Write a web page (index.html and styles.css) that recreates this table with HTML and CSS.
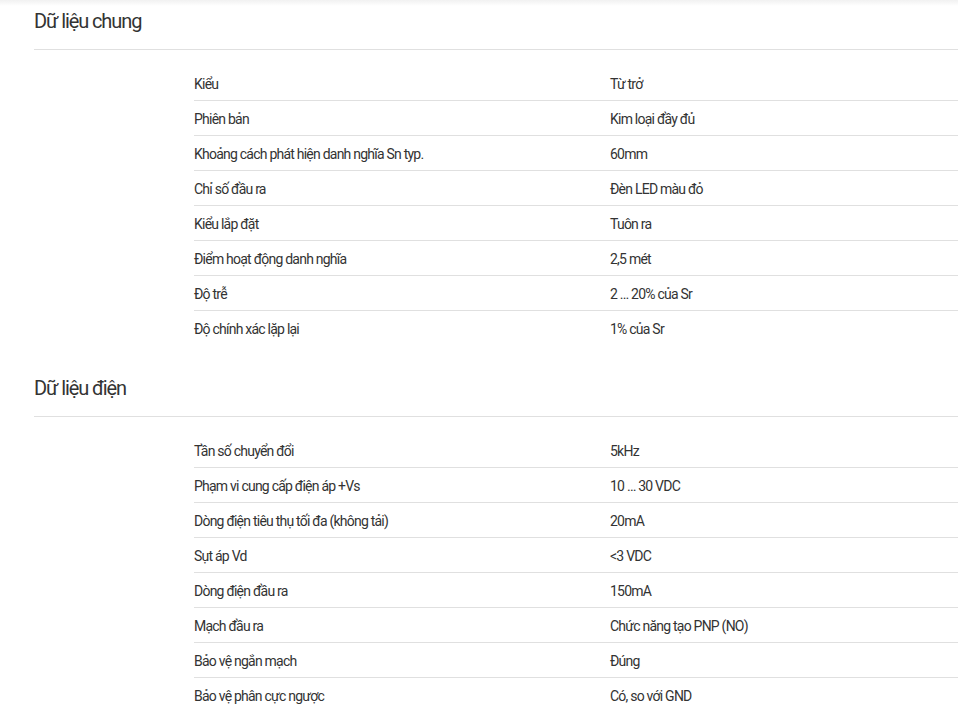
FILE: index.html
```html
<!DOCTYPE html>
<html lang="vi">
<head>
<meta charset="utf-8">
<title>Thông số kỹ thuật</title>
<link rel="stylesheet" href="styles.css">
</head>
<body>
<div class="topshadow"></div>
<main class="page">
  <section class="spec">
    <h2 class="spec-title">Dữ liệu chung</h2>
    <div class="spec-table">
      <div class="row"><div class="label">Kiểu</div><div class="value">Từ trở</div></div>
      <div class="row"><div class="label">Phiên bản</div><div class="value">Kim loại đầy đủ</div></div>
      <div class="row"><div class="label">Khoảng cách phát hiện danh nghĩa Sn typ.</div><div class="value">60mm</div></div>
      <div class="row"><div class="label">Chỉ số đầu ra</div><div class="value">Đèn LED màu đỏ</div></div>
      <div class="row"><div class="label">Kiểu lắp đặt</div><div class="value">Tuôn ra</div></div>
      <div class="row"><div class="label">Điểm hoạt động danh nghĩa</div><div class="value">2,5 mét</div></div>
      <div class="row"><div class="label">Độ trễ</div><div class="value">2 … 20% của Sr</div></div>
      <div class="row"><div class="label">Độ chính xác lặp lại</div><div class="value">1% của Sr</div></div>
    </div>
  </section>
  <section class="spec">
    <h2 class="spec-title">Dữ liệu điện</h2>
    <div class="spec-table">
      <div class="row"><div class="label">Tần số chuyển đổi</div><div class="value">5kHz</div></div>
      <div class="row"><div class="label">Phạm vi cung cấp điện áp +Vs</div><div class="value">10 … 30 VDC</div></div>
      <div class="row"><div class="label">Dòng điện tiêu thụ tối đa (không tải)</div><div class="value">20mA</div></div>
      <div class="row"><div class="label">Sụt áp Vd</div><div class="value">&lt;3 VDC</div></div>
      <div class="row"><div class="label">Dòng điện đầu ra</div><div class="value">150mA</div></div>
      <div class="row"><div class="label">Mạch đầu ra</div><div class="value">Chức năng tạo PNP (NO)</div></div>
      <div class="row"><div class="label">Bảo vệ ngắn mạch</div><div class="value">Đúng</div></div>
      <div class="row"><div class="label">Bảo vệ phân cực ngược</div><div class="value">Có, so với GND</div></div>
    </div>
  </section>
</main>
</body>
</html>
```

FILE: styles.css
```css
html, body {
  margin: 0;
  padding: 0;
  background: #ffffff;
}
body {
  font-family: Roboto, "Liberation Sans", sans-serif;
  color: #333333;
  overflow: hidden;
  position: relative;
}
.topshadow {
  position: absolute;
  left: 0;
  right: 0;
  top: 0;
  height: 6px;
  background: linear-gradient(#f1f1f1, rgba(255,255,255,0));
}
.page {
  padding-left: 34px;
}
.spec-title {
  margin: 29px 0 0;
  font-size: 20px;
  line-height: 28px;
  font-weight: 400;
  letter-spacing: -0.055em;
  padding-bottom: 14px;
  border-bottom: 1px solid #e0e0e0;
  color: #333333;
}
.spec:first-child .spec-title {
  margin-top: 7px;
}
.spec-table {
  margin-top: 16px;
  margin-left: 160px;
}
.row {
  display: grid;
  grid-template-columns: 416px 1fr;
  font-size: 14px;
  line-height: 20px;
  letter-spacing: -0.055em;
  padding: 8px 0 6px;
  border-bottom: 1px solid #e0e0e0;
}
.row:last-child {
  border-bottom: none;
}
```
